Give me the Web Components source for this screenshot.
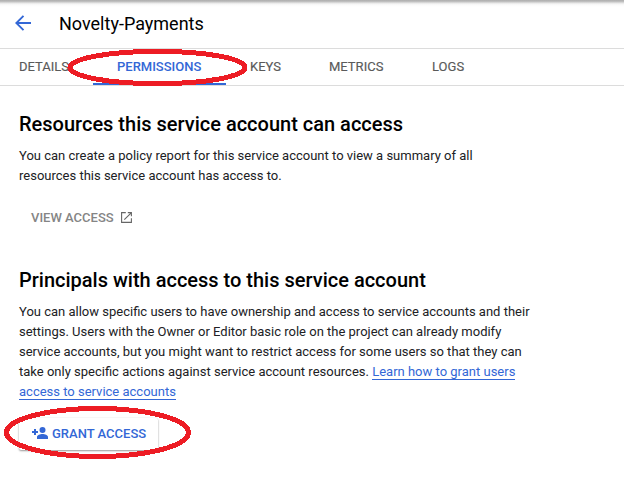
<!DOCTYPE html>
<html lang="en"><head><meta charset="utf-8"><title>Novelty-Payments</title>
<style>
body{margin:0;background:#fff;font-family:Roboto,"Liberation Sans",sans-serif;color:#202124}
</style></head><body>
<account-page></account-page>
<script>
const define=(name,html)=>customElements.define(name,class extends HTMLElement{
  constructor(){super();this.attachShadow({mode:'open'}).innerHTML=html;}
});
define('page-header',`<style>
:host{display:flex;box-sizing:border-box;height:49px;padding-left:15px;align-items:center;border-bottom:1px solid #dcdcdc;
background:linear-gradient(#b0b0b0 0,#b5b5b5 1px,#c9c9c9 2px,#e4e4e4 3px,#f4f4f4 4px,#fbfbfb 5px,#fff 7px)}
svg{width:16px;height:16px;margin-top:-2px;flex:none}
h1{margin:0 0 0 28px;font-size:18px;line-height:24px;font-weight:400;letter-spacing:0;color:#000}
</style><svg viewBox="0 0 16 16" fill="none" stroke="#3367d6" stroke-width="1.9"><path d="M16 8H2M8.5.8 1.3 8l7.2 7.2"/></svg><h1><slot></slot></h1>`);
define('tab-bar',`<style>
:host{display:flex;box-sizing:border-box;height:37px;padding-right:24px;border-bottom:1px solid #dcdcdc}
</style><slot></slot>`);
define('tab-item',`<style>
:host{display:block;box-sizing:border-box;height:36px;width:var(--w);padding-left:24px;font-size:13px;line-height:35px;font-weight:400;-webkit-text-stroke:.15px;white-space:nowrap;color:#5a5a5a}
:host([first]){padding-left:19px}
:host([active]){color:#3367d6;border-bottom:2px solid #3367d6;font-weight:500;-webkit-text-stroke:0}
</style><slot></slot>`);
define('info-section',`<style>
:host{display:block;padding:0 19px}
h2{margin:0;font-size:20px;line-height:28px;font-weight:500;color:#000;white-space:nowrap}
p{margin:8px 0 0;font-size:13px;line-height:20px;color:#202124;white-space:nowrap}
</style><h2><slot name="title"></slot></h2><p><slot></slot></p><slot name="action"></slot>`);
define('text-link',`<style>
:host{color:#3367d6}span{border-bottom:1px solid #3367d6}
</style><span><slot></slot></span>`);
define('view-button',`<style>
:host{display:flex;align-items:center;height:36px;margin-top:13px;padding-left:12px;font-size:13px;font-weight:500;color:#858585}
svg{width:11px;height:11px;margin-left:7px}
</style><slot></slot><svg viewBox="0 0 11 11" fill="none" stroke="#666" stroke-width="1.1"><path d="M4.8.6H.6v9.8h9.8V6.2M6.8.6h3.6v3.6M10.2.8 3.3 7.7"/></svg>`);
define('grant-button',`<style>
:host{display:flex;box-sizing:border-box;align-items:center;width:139px;height:32px;margin-top:16px;padding-left:13px;padding-bottom:2px;border-radius:2px;font-size:13px;font-weight:500;color:#3367d6;background:#fff;box-shadow:0 1px 2px rgba(0,0,0,.4),0 0 1px rgba(0,0,0,.12)}
svg{width:16px;height:12px;margin-right:4px}
</style><svg viewBox="0 0 16 12" fill="#3367d6"><circle cx="10.5" cy="3" r="3"/><path d="M5 12v-2c0-2 3.2-3 5.5-3s5.5 1 5.5 3v2zM2 2h2v2h2v2H4v2H2V6H0V4h2z"/></svg><slot></slot>`);
define('red-marks',`<style>:host{position:absolute;left:0;top:0;width:624px;height:502px;pointer-events:none}svg{display:block}</style>
<svg width="624" height="502" fill="none" stroke="#ed1c24" stroke-width="5" shape-rendering="crispEdges"><ellipse cx="157.5" cy="67.5" rx="87.5" ry="16.2"/><ellipse cx="97.5" cy="432.5" rx="91" ry="24"/></svg>`);
define('account-page',`<style>
:host{display:block;position:relative;width:624px;height:502px;overflow:hidden}
.one{margin-top:24px}.two{margin-top:31px}
</style>
<page-header>Novelty-Payments</page-header>
<tab-bar><tab-item first style="--w:93px">DETAILS</tab-item><tab-item active style="--w:133px">PERMISSIONS</tab-item><tab-item style="--w:79px">KEYS</tab-item><tab-item style="--w:103px">METRICS</tab-item><tab-item style="--w:79px">LOGS</tab-item></tab-bar>
<info-section class="one"><span slot="title">Resources this service account can access</span>You can create a policy report for this service account to view a summary of all<br>resources this service account has access to.<view-button slot="action">VIEW ACCESS</view-button></info-section>
<info-section class="two"><span slot="title">Principals with access to this service account</span>You can allow specific users to have ownership and access to service accounts and their<br>settings. Users with the Owner or Editor basic role on the project can already modify<br>service accounts, but you might want to restrict access for some users so that they can<br>take only specific actions against service account resources. <text-link>Learn how to grant users</text-link><br><text-link>access to service accounts</text-link><grant-button slot="action">GRANT ACCESS</grant-button></info-section>
<red-marks></red-marks>`);
</script></body></html>
